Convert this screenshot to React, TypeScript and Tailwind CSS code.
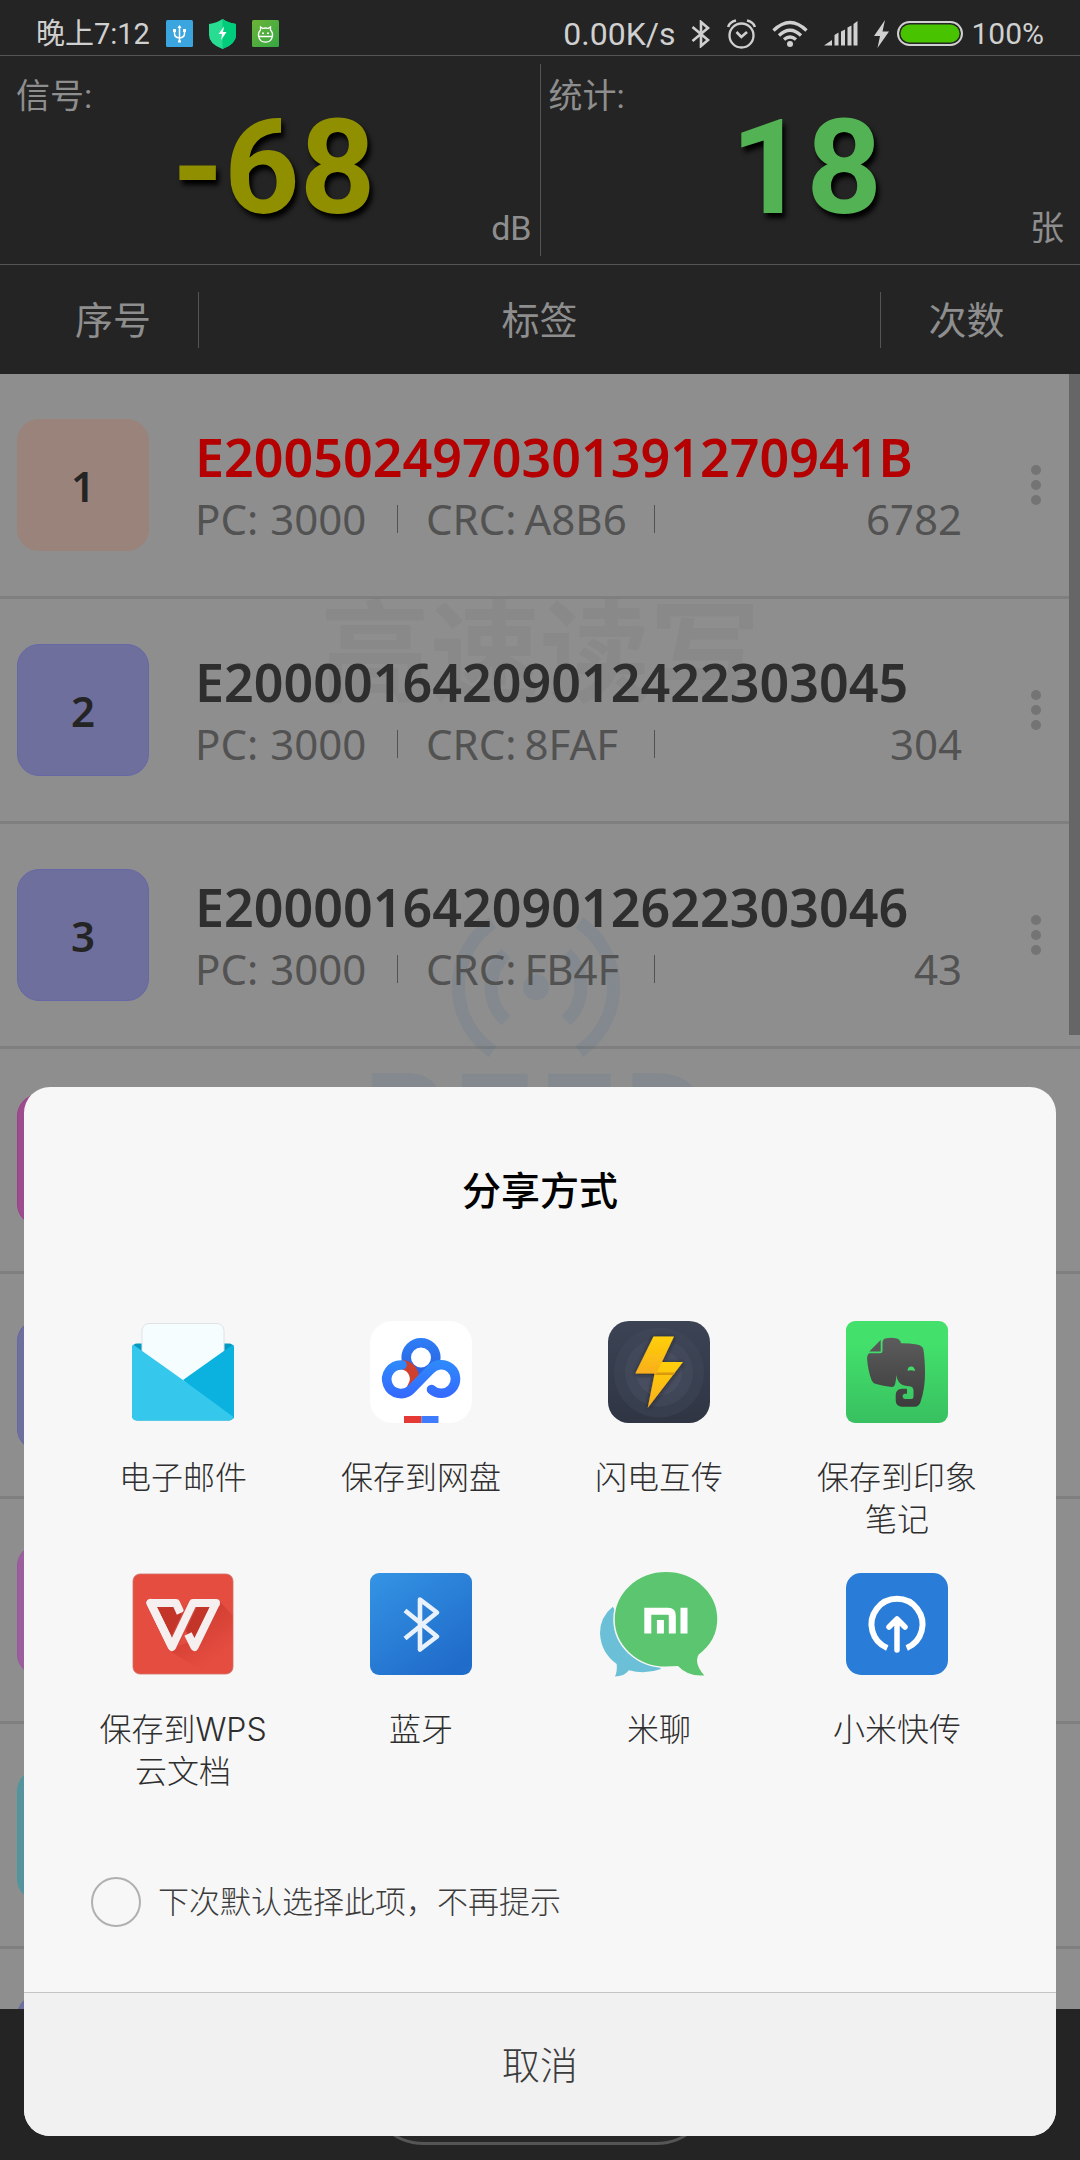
import type { ReactNode } from "react";

type Tag = {
  id: number;
  badge: string;
  epc?: string;
  hot?: boolean;
  pc?: string;
  crc?: string;
  count?: string;
};

const tags: Tag[] = [
  { id: 1, badge: "border-[#9a837a] bg-[#9a837a]", epc: "E2005024970301391270941B", hot: true, pc: "3000", crc: "A8B6", count: "6782" },
  { id: 2, badge: "border-[#6668a6] bg-[#6e6f9d]", epc: "E20000164209012422303045", pc: "3000", crc: "8FAF", count: "304" },
  { id: 3, badge: "border-[#6668a6] bg-[#6e6f9d]", epc: "E20000164209012622303046", pc: "3000", crc: "FB4F", count: "43" },
  { id: 4, badge: "border-[#9c3f88] bg-[#9d4d8d]" },
  { id: 5, badge: "border-[#6668a6] bg-[#6e6f9d]" },
  { id: 6, badge: "border-[#9c55a0] bg-[#9a5f9c]" },
  { id: 7, badge: "border-[#469ba0] bg-[#57939c]" },
  { id: 8, badge: "border-[#6668a6] bg-[#6e6f9d]" },
];

function StatusBar() {
  return (
    <header className="flex h-[55px] shrink-0 items-center justify-between pt-3 pr-9 pl-9 text-[#d0d0d0]">
      <div className="flex items-center">
        <span className="mr-4 text-[29px] leading-8">晚上7:12</span>
        <svg className="mr-4 size-[27px]" viewBox="0 0 27 27" fill="none" stroke="#fff">
          <rect width="27" height="27" rx="1.5" fill="#3ba5e0" stroke="none" />
          <path d="M13.5 6v16M8.500 10v3.500q0 4 5 4.500q5-.5 5-4.500V10" strokeWidth="1.5" />
          <path d="M11.500 8h4l-2-3zM7 9h3v3H7zM17 9h3v3h-3zM12 20.500h3v2h-3z" fill="#fff" stroke="none" />
        </svg>
        <svg className="mr-4 h-[30px] w-[27px]" viewBox="0 0 27 30">
          <path d="M13.500 0Q19 4 27 5v11q0 9-13.500 14Q0 25 0 16V5q8-1 13.500-5z" fill="#28dd92" />
          <path d="M13.500 0Q19 4 27 5v11q0 9-13.500 14z" fill="#00cd7c" />
          <path d="M15 7.500 9.500 15h3.500l-.8 6 5.300-8H14z" fill="#fff" />
        </svg>
        <svg className="size-[27px]" viewBox="0 0 27 27" fill="none" stroke="#fff" strokeWidth="1.3">
          <defs>
            <linearGradient id="droid" x1="0" y1="0" x2="1" y2="1">
              <stop offset="0" stopColor="#6db436" />
              <stop offset="1" stopColor="#34a745" />
            </linearGradient>
          </defs>
          <rect width="27" height="27" rx="1.500" fill="url(#droid)" stroke="none" />
          <path d="M8.500 10 8.500 7l2.500 1.500q2.500-1 5 0L18.500 7v3q2.500 2.500 2 6-1 6.200-7 6.200T6.500 16q-.5-3.500 2-6zM7 16.500h13" />
          <path d="M10 12.500h2v1.500h-2zM15 12.500h2v1.500h-2z" fill="#fff" stroke="none" />
        </svg>
      </div>
      <div className="flex items-center">
        <span className="mr-4 text-[32px] leading-8">0.00K/s</span>
        <svg className="mr-4 h-7 w-5" viewBox="0 0 20 28" fill="none" stroke="#d0d0d0" strokeWidth="2.6">
          <path d="m1.500 7 15.500 13-7 6V2l7 6L1.500 21" />
        </svg>
        <svg className="mr-4 h-[30px] w-[29px]" viewBox="0 0 29 30" fill="none" stroke="#d0d0d0" strokeWidth="2.3">
          <circle cx="14.500" cy="16.500" r="12" />
          <path d="m9.500 13 4.800 5 5.700-5M1.200 8Q2.500 3 9 1.500M27.800 8Q26.500 3 20 1.500" strokeWidth="2.600" />
        </svg>
        <svg className="mr-4 h-[27px] w-9" viewBox="0 0 36 27" fill="none" stroke="#d0d0d0" strokeWidth="3.300">
          <path d="M1.500 10.500Q18-5.500 34.500 10.500M7 15.500q11-10.500 22 0M12 19.500q6-5 12 0" />
          <circle cx="18" cy="24" r="3" fill="#d0d0d0" stroke="none" />
        </svg>
        <svg className="mr-4 h-[25px] w-[34px]" viewBox="0 0 34 25" fill="#d0d0d0">
          <path d="M0 24.500 8 19v5.500zM10.500 14l4-2.500v13h-4zM17 10.500l4-2v16h-4zM23.500 6.500l4-2v20h-4zM29.500 3l4-3v24.500h-4z" />
        </svg>
        <svg className="mr-2 h-7 w-[15px]" viewBox="0 0 15 28" fill="#d0d0d0">
          <path d="M11 0 0 16h6L3.500 28 15 11.500H8.500z" />
        </svg>
        <svg className="mr-2 h-[25px] w-[66px]" viewBox="0 0 66 25">
          <rect x="1" y="1" width="64" height="23" rx="11.500" fill="#242424" stroke="#d0d0d0" strokeWidth="2" />
          <rect x="3.500" y="3.500" width="59" height="18" rx="9" fill="#48c300" />
        </svg>
        <span className="text-[30px] leading-8">100%</span>
      </div>
    </header>
  );
}

function Stat({ label, value, unit, color, pad }: { label: string; value: string; unit: string; color: string; pad: string }) {
  return (
    <div className={"grid flex-1 grid-cols-[88px_1fr_88px] " + pad}>
      <span className="pt-4 text-[34px] leading-[48px] whitespace-nowrap text-[#8e8e8e]">{label}</span>
      <strong className={"self-center pt-4 text-center text-[132px] leading-[160px] font-bold [text-shadow:3px_5px_5px_#000] " + color}>{value}</strong>
      <span className="self-end pb-3 text-right text-[34px] leading-[48px] text-[#8e8e8e]">{unit}</span>
    </div>
  );
}

function Watermark() {
  return (
    <div aria-hidden="true" className="absolute inset-x-0 top-[202px] flex flex-col items-center">
      <span className="text-[110px] leading-[160px] font-bold text-[#898989]">高速读写</span>
      <svg className="mt-[181px] mr-2 h-[140px] w-[172px] overflow-visible" viewBox="-86 -70 172 140" fill="none" stroke="#83898e" strokeWidth="13">
        <circle r="13" fill="#83898e" stroke="none" />
        <path d="M-43.500-64.500a78 78 0 0 0 0 129M43.500-64.500a78 78 0 0 1 0 129M-30-33.500a45 45 0 0 0 0 67M30-33.500a45 45 0 0 1 0 67" />
      </svg>
      <span className="mr-2 font-['DejaVu_Sans_Mono'] text-[144px] leading-[144px] font-bold text-[#83898e]">RFID</span>
    </div>
  );
}

function TagRow({ tag }: { tag: Tag }) {
  return (
    <li className="flex h-[225px] items-center border-b-[3px] border-black/10 pr-[39px] pl-[17px]">
      <span className={"flex size-[132px] shrink-0 items-center justify-center rounded-[22px] border font-['Noto_Sans'] text-[42px] font-semibold text-[#242424] " + tag.badge}>
        {tag.epc && tag.id}
      </span>
      {tag.epc && (
        <>
          <div className="mr-[69px] ml-[46px] flex flex-1 flex-col pt-1.5 font-['Noto_Sans']">
            <span className={"text-[52px] leading-[62px] font-semibold " + (tag.hot ? "text-[#b40000]" : "text-[#2e2e2e]")}>{tag.epc}</span>
            <div className="flex items-center text-[42px] leading-[62px] text-[#525252]">
              <span className="w-[202px]">
                PC:<span className="ml-3">{tag.pc}</span>
              </span>
              <i className="h-7 w-px bg-[#525252]" />
              <span className="ml-7 w-[228px]">
                CRC:<span className="ml-2">{tag.crc}</span>
              </span>
              <i className="h-7 w-px bg-[#525252]" />
              <span className="ml-auto">{tag.count}</span>
            </div>
          </div>
          <button type="button" aria-label="更多" className="flex flex-col gap-[5px]">
            <i className="size-[10px] rounded-full bg-[#747474]" />
            <i className="size-[10px] rounded-full bg-[#747474]" />
            <i className="size-[10px] rounded-full bg-[#747474]" />
          </button>
        </>
      )}
    </li>
  );
}

const tile = "size-[102px]";

const MailIcon = (
  <svg className={tile} viewBox="0 0 102 102">
    <rect y="22.500" width="102" height="77" rx="5" fill="#0499c0" />
    <rect x="10" y="2.500" width="82" height="80" rx="7" fill="#f6fdff" stroke="#dfe3e4" />
    <path d="M51 59 101 23.500q1 1 1 3V97l-4 2z" fill="#0bb2df" />
    <path d="M1 23.500 51 59l50.500 37q-1.500 3.500-4.500 3.500H5q-5 0-5-5v-68q0-2 1-3z" fill="#35c7ec" />
  </svg>
);

const DiskIcon = (
  <svg className={tile} viewBox="0 0 102 102" fill="none" strokeWidth="9.600" strokeLinecap="round">
    <defs>
      <linearGradient id="pan" gradientUnits="userSpaceOnUse" x1="0" y1="38" x2="0" y2="77">
        <stop offset="0" stopColor="#2e8cfb" />
        <stop offset="1" stopColor="#3568ff" />
      </linearGradient>
      <linearGradient id="panTop" gradientUnits="userSpaceOnUse" x1="0" y1="16" x2="0" y2="57">
        <stop offset="0" stopColor="#2f7ef9" />
        <stop offset="1" stopColor="#2a5fdc" />
      </linearGradient>
    </defs>
    <rect width="102" height="102" rx="22" fill="#fff" />
    <circle cx="51" cy="36.500" r="14.800" stroke="url(#panTop)" />
    <path d="M34 44a14.300 14.300 0 0 1 8 22" stroke="#d0402e" />
    <path d="M32 44A14.300 14.300 0 1 0 41.500 68L60.500 48.500A14.300 14.300 0 1 1 61.500 68.500" stroke="url(#pan)" />
    <path d="M34 95h17.500v7H34z" fill="#e53935" />
    <path d="M51.500 95h17v7h-17z" fill="#3f7bff" />
  </svg>
);

const FlashIcon = (
  <svg className={tile} viewBox="0 0 102 102">
    <defs>
      <linearGradient id="night" x1="0" y1="0" x2="0" y2="1">
        <stop offset="0" stopColor="#3c4354" />
        <stop offset="1" stopColor="#2f3543" />
      </linearGradient>
      <linearGradient id="gold" x1="0" y1="0" x2="0" y2="1">
        <stop offset="0" stopColor="#ffd008" />
        <stop offset="1" stopColor="#f9ae1c" />
      </linearGradient>
      <filter id="glow" x="-30%" y="-30%" width="160%" height="160%">
        <feDropShadow dx="0" dy="1" stdDeviation="2" floodColor="#14171f" floodOpacity="0.800" />
      </filter>
    </defs>
    <rect width="102" height="102" rx="21" fill="url(#night)" />
    <circle cx="51" cy="51.500" r="45" fill="#464c5f" opacity="0.350" />
    <circle cx="51" cy="51.500" r="34" fill="#4a4f62" opacity="0.450" />
    <circle cx="51" cy="51.500" r="23" fill="#4f5467" opacity="0.500" />
    <g filter="url(#glow)">
      <path d="M53 41h22L39.700 87l7-35z" fill="url(#gold)" />
      <path d="M48 51.500h19l-1.500 2.500H47z" fill="#d9980a" />
      <path d="M45.500 15.500H66L48.500 52.500H27.300z" fill="url(#gold)" />
    </g>
  </svg>
);

const NoteIcon = (
  <svg className={tile} viewBox="0 0 102 102">
    <defs>
      <linearGradient id="leaf" x1="0" y1="0" x2="0" y2="1">
        <stop offset="0.200" stopColor="#43e16c" />
        <stop offset="1" stopColor="#38c060" />
      </linearGradient>
      <linearGradient id="slate" x1="0" y1="0" x2="0" y2="1">
        <stop offset="0" stopColor="#5c5c5c" />
        <stop offset="1" stopColor="#3c3c3c" />
      </linearGradient>
    </defs>
    <rect width="102" height="102" rx="9" fill="url(#leaf)" />
    <path d="M23.300 30.500 34.700 19v11.500z" fill="#575757" />
    <path
      d="M23 32.300h11q2.500 0 2.500-2.500V21q.5-3.500 4-3.800Q46 16.300 51 17.500q3.500 1.500 4 4.700 9 0 16 1.300 6 1 6.500 5.500Q79 39 79 52.500 79 68 74.500 81q-1.500 4.700-6 4.700h-13q-5.800-.700-5.800-6.500v-5.500q.3-5.500 6-6h5.300v5h-2.500q-1.800.3-1.800 2v1q.3 2.300 2.500 2.300h6q2.300 0 2.300-2.300v-6q0-4.200-4-4.500-6-.3-9-2.500-3.500-3-4-8.700-.500 5.500-1.500 9.500-.700 2.500-3.300 2.500Q37 65 30 63q-3.500-1-4.500-4Q22 50 21 37q0-3 2-4.700z"
      fill="url(#slate)"
    />
    <path d="M61.500 49.800q.3-4.300 3.700-4.300t3.800 4.500q-4-1.200-7.500-.2z" fill="#43dc6b" />
  </svg>
);

const WpsIcon = (
  <svg className={tile} viewBox="0 0 102 102">
    <defs>
      <linearGradient id="cast" gradientUnits="userSpaceOnUse" x1="55" y1="50" x2="82" y2="88">
        <stop offset="0" stopColor="#c33527" />
        <stop offset="1" stopColor="#e64d41" />
      </linearGradient>
    </defs>
    <rect x="1" y="1" width="100" height="100" rx="7" fill="#e64d41" stroke="#cf6e66" strokeWidth="0.800" />
    <path d="M87 28 100.500 42v30L74 100 36 77l26-10z" fill="url(#cast)" opacity="0.600" />
    <path d="M18 30h27l5 12-10 32zM61 30h23L62.500 74 54 58z" fill="#c33528" />
    <path d="M48.500 40 44 30H18.500L40 74M84 30 62.500 74 56 61" fill="none" stroke="#f6eff0" strokeWidth="8" strokeLinejoin="round" />
    <path d="M40 74 61 30" stroke="#d24a3f" strokeWidth="10.500" />
    <path d="M18.500 30 40 74 61 30H84" fill="none" stroke="#f6eff0" strokeWidth="8" strokeLinejoin="round" strokeLinecap="round" />
  </svg>
);

const BluetoothIcon = (
  <svg className={tile} viewBox="0 0 102 102">
    <defs>
      <linearGradient id="sky" x1="0" y1="0" x2="0.700" y2="1">
        <stop offset="0" stopColor="#3494e4" />
        <stop offset="1" stopColor="#206cca" />
      </linearGradient>
    </defs>
    <rect width="102" height="102" rx="9" fill="url(#sky)" />
    <path d="m35 37.500 32 26-17 13v-50l17 13-32 26" fill="none" stroke="#e8f1fc" strokeWidth="4.600" strokeLinejoin="round" />
  </svg>
);

const ChatIcon = (
  <svg className="h-[108px] w-[120px] shrink-0" viewBox="0 0 120 108">
    <path d="M13.700 36.700Q1 47 1 63.300 2 83 17.700 94q.6 8-1.700 12.500 9 0 14-6.200 16 4.500 32-1.300z" fill="#6bc0d8" />
    <path
      d="M67 1.300c29 0 52 21.500 52 48 0 14-6 26-18.700 35.700-3.600 6-1.300 12.500 6.400 21-13 1.500-21.700-2.500-28-9.200Q73 97.300 67 97.300c-29 0-52-21.500-52-48s23-48 52-48z"
      fill="#5bc66f"
      stroke="#f7f7f7"
      strokeWidth="1.500"
    />
    <path d="M48.800 63.500V41.300H69q4.300 0 4.300 4.300v17.900M61.400 63.500V50M85 63.500V37.800" fill="none" stroke="#fff" strokeWidth="7" />
  </svg>
);

const TransferIcon = (
  <svg className={tile} viewBox="0 0 102 102" fill="none" stroke="#fff">
    <rect width="102" height="102" rx="15" fill="#297cd7" stroke="none" />
    <path d="M41.300 74.900a25.500 25.500 0 1 1 19.400 0" strokeWidth="6" />
    <path d="M51 47v30M43 54l8-8 8 8" strokeWidth="5.500" strokeLinecap="round" strokeLinejoin="round" />
  </svg>
);

const targets: { name: string; icon: ReactNode }[] = [
  { name: "电子邮件", icon: MailIcon },
  { name: "保存到网盘", icon: DiskIcon },
  { name: "闪电互传", icon: FlashIcon },
  { name: "保存到印象笔记", icon: NoteIcon },
  { name: "保存到WPS云文档", icon: WpsIcon },
  { name: "蓝牙", icon: BluetoothIcon },
  { name: "米聊", icon: ChatIcon },
  { name: "小米快传", icon: TransferIcon },
];

function ShareSheet() {
  return (
    <section
      role="dialog"
      aria-modal="true"
      aria-labelledby="share-title"
      className="absolute inset-x-6 bottom-6 flex flex-col overflow-hidden rounded-[26px] bg-[#f7f7f7] font-['Inter','Noto_Sans_CJK_SC',sans-serif]"
    >
      <h2 id="share-title" className="pt-[76px] text-center text-[39px] leading-[56px] font-medium text-black">
        分享方式
      </h2>
      <div className="mt-[102px] grid grid-cols-4 gap-y-[26px] px-10">
        {targets.map((t) => (
          <button key={t.name} type="button" className="flex h-[226px] flex-col items-center">
            <span className="flex size-[102px] shrink-0 items-center justify-center">{t.icon}</span>
            <span className="mt-[34px] w-44 text-[32px] leading-[42px] font-light text-[#2e2e2e]">{t.name}</span>
          </button>
        ))}
      </div>
      <label className="mt-[78px] mb-[65px] ml-[67px] flex items-center gap-[17px] text-[31px] leading-[50px] font-light text-[#3c3c3c]">
        <input type="checkbox" className="size-[50px] appearance-none rounded-full border-2 border-[#b0b0b0]" />
        下次默认选择此项，不再提示
      </label>
      <button type="button" className="h-36 border-t border-[#c4c4c4] bg-[#f1f1f1] pt-0.5 text-[38px] font-light text-[#3c3c3c]">
        取消
      </button>
    </section>
  );
}

export default function App() {
  return (
    <div className="relative flex h-screen flex-col overflow-hidden bg-[#242424] font-['Roboto','Noto_Sans_CJK_SC',sans-serif]">
      <StatusBar />
      <section className="flex h-[210px] shrink-0 items-stretch border-y border-[#555]">
        <Stat label="信号:" value="-68" unit="dB" color="text-[#8f8f00]" pad="pl-4 pr-2" />
        <i className="my-2 w-px bg-[#555]" />
        <Stat label="统计:" value="18" unit="张" color="text-[#53b253]" pad="pl-2 pr-4" />
      </section>
      <div className="flex h-[109px] shrink-0 items-center px-7 text-center text-[38px] leading-[54px] text-[#8e8e8e]">
        <span className="w-[170px] pt-0.5">序号</span>
        <span className="flex-1 border-x border-[#555] pt-0.5">标签</span>
        <span className="w-[171px] pt-0.5">次数</span>
      </div>
      <main className="relative min-h-0 flex-1 overflow-hidden bg-[#8e8e8e]">
        <Watermark />
        <ul className="relative">
          {tags.map((t) => (
            <TagRow key={t.id} tag={t} />
          ))}
        </ul>
        <i className="absolute top-0 right-0 h-[661px] w-[11px] bg-[#666]" />
      </main>
      <footer className="flex h-[151px] shrink-0 justify-center pt-5">
        <button type="button" aria-label="开始" className="h-[116px] w-[348px] rounded-full border-[3px] border-[#555] bg-[#282828]" />
      </footer>
      <ShareSheet />
    </div>
  );
}
